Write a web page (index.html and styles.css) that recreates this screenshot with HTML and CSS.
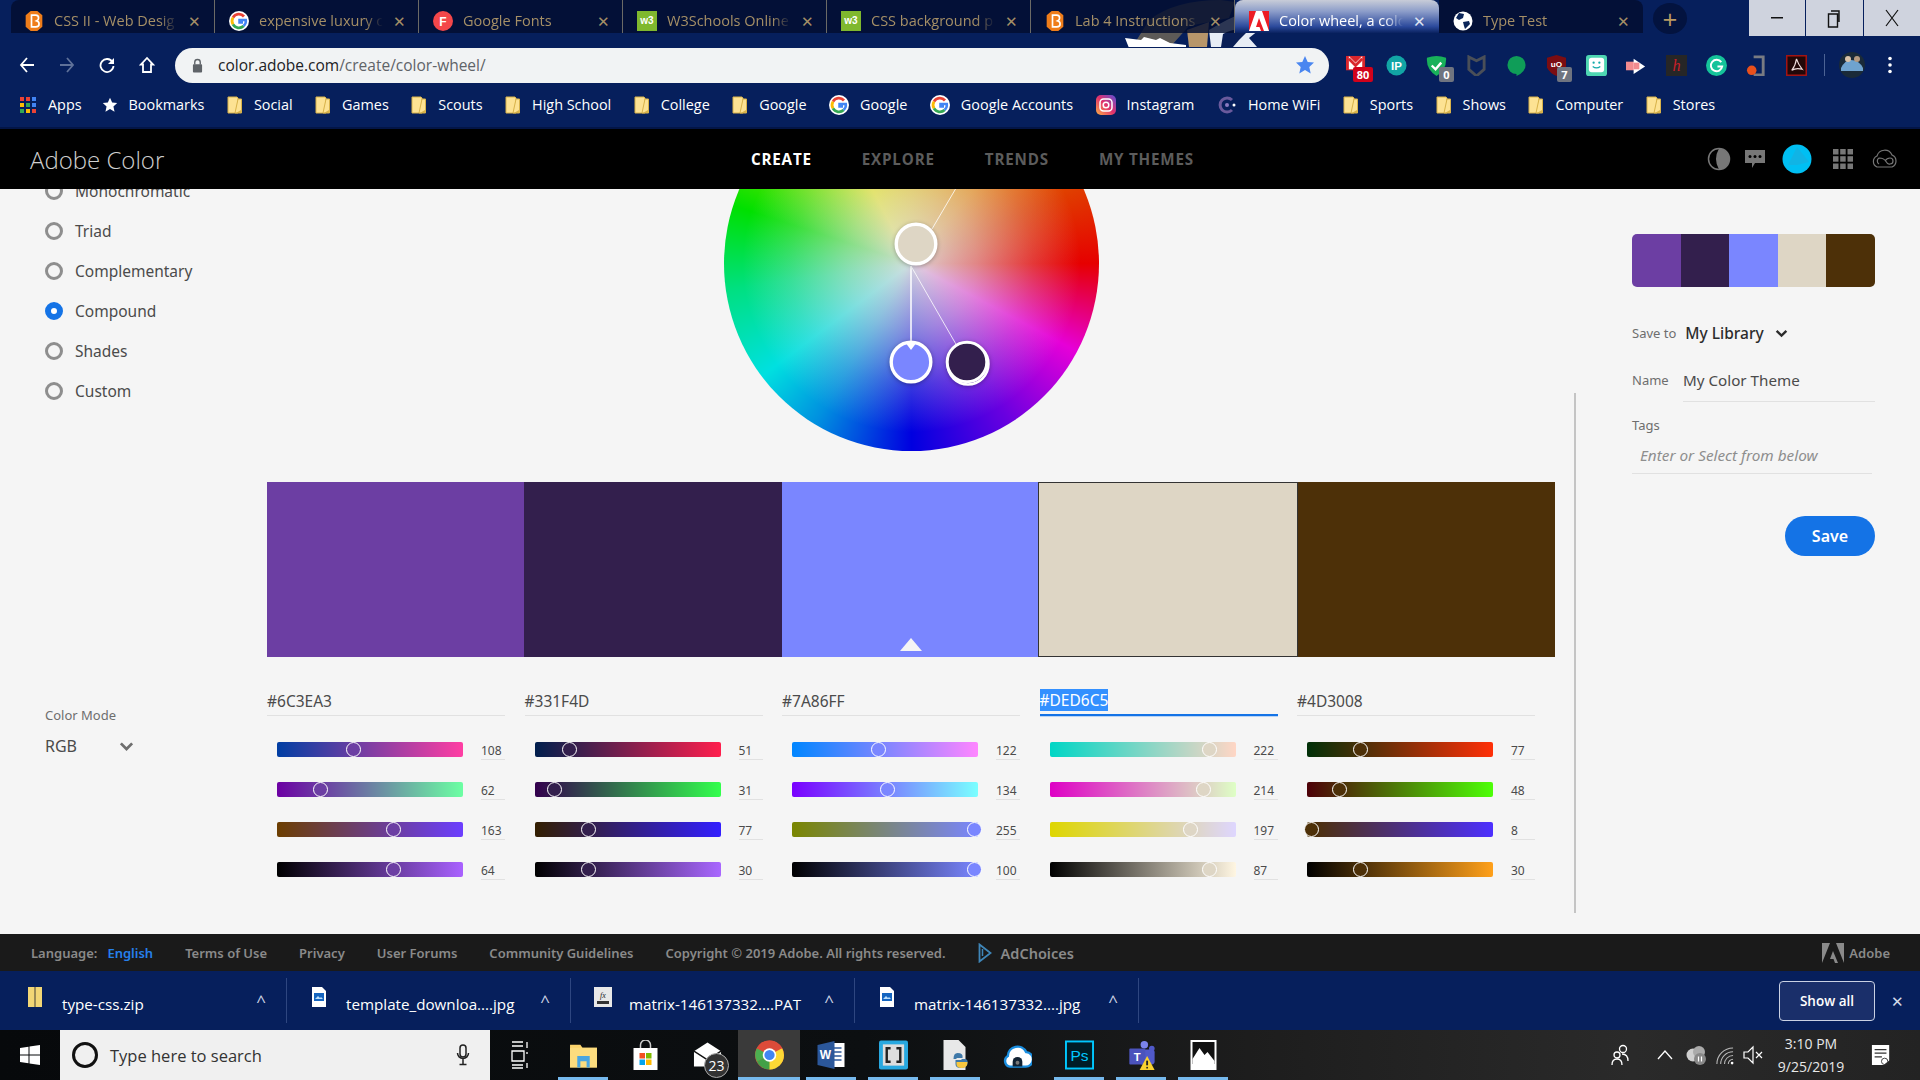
FILE: index.html
```html
<!DOCTYPE html>
<html lang="en">
<head>
    <meta charset="UTF-8">
    <title>Color wheel, a color palette generator | Adobe Color</title>
    <link rel="stylesheet" href="styles.css">
</head>
<body>
    <svg class="defs" width="0" height="0">
        <symbol id="folder" viewBox="0 0 16 18">
            <path d="M1 1h9l1 1v15H1z" fill="#fde293" stroke="#d8b24a"/>
            <path d="M11 3h3.500v14H8z" fill="#fde293" stroke="#d8b24a"/>
            <path d="M9 17l5-3v3z" fill="#d8b24a"/>
        </symbol>
        <symbol id="google" viewBox="0 0 20 20">
            <circle cx="10" cy="10" r="10" fill="#fff"/>
            <path d="M15 5.500A6.800 6.800 0 0 0 4 6.600" fill="none" stroke="#ea4335" stroke-width="2.800"/>
            <path d="M4 6.600a6.800 6.800 0 0 0 0 6.800" fill="none" stroke="#fbbc05" stroke-width="2.800"/>
            <path d="M4 13.400a6.800 6.800 0 0 0 10.600 1.600" fill="none" stroke="#34a853" stroke-width="2.800"/>
            <path d="M14.600 15a6.800 6.800 0 0 0 2.200-6H10.500v2.500h3.500" fill="none" stroke="#4285f4" stroke-width="2.500"/>
        </symbol>
        <symbol id="d2l" viewBox="0 0 20 24">
            <path d="M6 0h8l6 5v14l-6 5H6l-6-5V5z" fill="#ef7d1a"/>
            <path d="M7 5h5q3.500 0 3.500 3.300 0 2.500-2.200 3.500 2.800.800 2.800 3.700 0 3.500-4 3.500H7z" fill="none" stroke="#fff" stroke-width="2"/>
        </symbol>
        <symbol id="w3" viewBox="0 0 20 20">
            <rect width="20" height="20" fill="#7fb82e"/>
            <text x="10" y="13" font-size="10" font-weight="700" font-family="Liberation Sans" text-anchor="middle" fill="#fff">w3</text>
        </symbol>
        <symbol id="caret" viewBox="0 0 12 8">
            <path d="M1.500 1.500L6 6l4.500-4.500" fill="none" stroke="currentColor" stroke-width="2.200"/>
        </symbol>
        <symbol id="jpgfile" viewBox="0 0 14 20">
            <path d="M0 0h10l4 4v16H0z" fill="#fff"/>
            <rect x="2" y="6" width="10" height="8" fill="#1565c0"/>
            <path d="M3 12l3-3 2 2 1-1 2 2z" fill="#bbdefb"/>
        </symbol>
    </svg>

    <div class="chrome-top">
        <svg class="eagle" viewBox="0 0 140 47">
            <path d="M8 46L24 20Q50 0 96 0l14 2-6 16-40 8-18 20z" fill="#5d5a57"/>
            <path d="M0 38l16 2 3-3 12 3 4-2 10 5 16 2v3H4z" fill="#fff"/>
            <path d="M62 30l22-8-2 25H64z" fill="#b8966a"/>
            <path d="M84 30q20-12 36-18 12 4 14 18l-10 8 8 9H86z" fill="#e8edf5"/>
            <path d="M98 34q14-8 24-2l-8 8-6 7H96z" fill="#0a1f56"/>
        </svg>

        <div class="tabstrip">
            <div class="tab"><svg class="fav"><use href="#d2l"/></svg><span class="tab-title">CSS II - Web Desig</span><span class="tab-x">✕</span></div>
            <div class="tab"><svg class="fav"><use href="#google"/></svg><span class="tab-title">expensive luxury c</span><span class="tab-x">✕</span></div>
            <div class="tab">
                <svg class="fav" viewBox="0 0 20 20"><circle cx="10" cy="10" r="10" fill="#f4474a"/><text x="10" y="14.500" font-size="12" font-weight="700" font-family="Liberation Sans" text-anchor="middle" fill="#fff">F</text></svg>
                <span class="tab-title">Google Fonts</span><span class="tab-x">✕</span>
            </div>
            <div class="tab"><svg class="fav"><use href="#w3"/></svg><span class="tab-title">W3Schools Online</span><span class="tab-x">✕</span></div>
            <div class="tab"><svg class="fav"><use href="#w3"/></svg><span class="tab-title">CSS background p</span><span class="tab-x">✕</span></div>
            <div class="tab"><svg class="fav"><use href="#d2l"/></svg><span class="tab-title">Lab 4 Instructions</span><span class="tab-x">✕</span></div>
            <div class="tab tab-active">
                <svg class="fav" viewBox="0 0 20 20"><rect width="20" height="20" fill="#fff"/><path d="M7 0H0v20zM13 0h7v20zM10 7l5 13h-3l-1.500-4H7z" fill="#ec1c24"/></svg>
                <span class="tab-title">Color wheel, a colo</span><span class="tab-x">✕</span>
            </div>
            <div class="tab tab-last">
                <svg class="fav" viewBox="0 0 20 20"><circle cx="10" cy="10" r="9.500" fill="#fff"/><path d="M6 2l5 1-1 4-4 2-3-2zM10 11l6-1 1 3-5 5-1-3z" fill="#0b2559"/></svg>
                <span class="tab-title">Type Test</span><span class="tab-x">✕</span>
            </div>
            <div class="new-tab">+</div>
            <div class="win-btns">
                <div class="win-btn"><svg width="12" height="2"><rect width="12" height="1.500" fill="#111"/></svg></div>
                <div class="win-btn"><svg width="14" height="20" viewBox="0 0 14 20"><path d="M4 3h8v11M1.500 6h9v13h-9z" fill="none" stroke="#111" stroke-width="1.400"/></svg></div>
                <div class="win-btn"><svg width="14" height="18" viewBox="0 0 14 18"><path d="M1 1l12 16M13 1L1 17" fill="none" stroke="#111" stroke-width="1.200"/></svg></div>
            </div>
        </div>

        <div class="toolbar">
            <div class="nav-btns">
                <svg viewBox="0 0 16 18"><path d="M15 9H2M8 2L2 9l6 7" fill="none" stroke="#fff" stroke-width="1.800"/></svg>
                <svg viewBox="0 0 16 18"><path d="M1 9h13M8 2l6 7-6 7" fill="none" stroke="#5f7199" stroke-width="1.800"/></svg>
                <svg viewBox="0 0 16 18"><path d="M13.500 6A6.500 6.500 0 1 0 14.500 10" fill="none" stroke="#fff" stroke-width="1.800"/><path d="M15 2v6H9z" fill="#fff"/></svg>
                <svg viewBox="0 0 16 18"><path d="M8 2L2 8.500h2V16h8V8.500h2z" fill="none" stroke="#fff" stroke-width="1.800"/></svg>
            </div>
            <div class="urlbar">
                <svg class="lock" viewBox="0 0 12 16"><path d="M3 7V4.500a3 3 0 0 1 6 0V7" fill="none" stroke="#5f6368" stroke-width="1.500"/><rect x="1" y="6.500" width="10" height="9" rx="1" fill="#5f6368"/></svg>
                <span class="url"><b>color.adobe.com</b>/create/color-wheel/</span>
                <svg class="star" viewBox="0 0 20 20"><path d="M10 1l2.700 6 6.300.6-4.700 4.300 1.400 6.500L10 15l-5.700 3.400 1.400-6.500L1 7.600 7.300 7z" fill="#4a86f0"/></svg>
            </div>
            <div class="exts">
                <svg class="ext" viewBox="0 0 22 22"><path d="M0 1h20v15H0z" fill="#d9262c"/><path d="M3 1l7 7 7-7v14H3z" fill="#fff"/><path d="M3 4l7 7 7-7" fill="none" stroke="#d9262c" stroke-width="3"/></svg>
                <svg class="ext" viewBox="0 0 22 22"><circle cx="11" cy="11" r="10.500" fill="#12a5a5"/><text x="11" y="15.500" font-size="12" font-weight="700" font-family="Liberation Sans" text-anchor="middle" fill="#fff">IP</text></svg>
                <svg class="ext" viewBox="0 0 22 22"><path d="M1 3q10-4 20 0 1 12-10 19Q0 15 1 3z" fill="#18b15a"/><path d="M6 11l4 4 6-7" fill="none" stroke="#fff" stroke-width="2.500"/></svg>
                <svg class="ext" viewBox="0 0 22 22"><path d="M3 2l8 4 8-4v13l-8 7-8-7z" fill="none" stroke="#4a4f58" stroke-width="3"/></svg>
                <svg class="ext" viewBox="0 0 22 22"><path d="M11 1a9.500 9.500 0 0 1 9.500 9.500Q20.500 18 11 22v-2a9.500 9.500 0 0 1 0-19z" fill="#0f9d58"/></svg>
                <svg class="ext" viewBox="0 0 22 22"><path d="M1 3l10-3 10 3v10q-3 6-10 9-7-3-10-9z" fill="#7b0d12"/><text x="11" y="13" font-size="8.500" font-weight="700" font-family="Liberation Sans" text-anchor="middle" fill="#fff">uO</text></svg>
                <svg class="ext" viewBox="0 0 22 22"><rect width="22" height="22" rx="3" fill="#4ed6b2"/><rect x="3" y="3" width="16" height="15" rx="3" fill="#fff"/><circle cx="8" cy="8" r="1.200" fill="#1aa"/><circle cx="14" cy="8" r="1.200" fill="#1aa"/><path d="M7 12q4 3 8 0" fill="none" stroke="#1aa" stroke-width="1.300"/></svg>
                <svg class="ext" viewBox="0 0 22 22"><rect x="0" y="7" width="10" height="9" fill="#f28b8f"/><path d="M8 4l12 8-12 8z" fill="#fff"/><rect x="8" y="8" width="6" height="7" fill="#f28b8f"/></svg>
                <svg class="ext" viewBox="0 0 22 22"><rect width="22" height="22" fill="#262626"/><text x="11" y="17" font-size="17" font-style="italic" font-family="Liberation Serif" text-anchor="middle" fill="#c8202a">h</text></svg>
                <svg class="ext" viewBox="0 0 22 22"><circle cx="11" cy="11" r="11" fill="#15c39a"/><path d="M16 7.500a6 6 0 1 0 1 4.500h-5" fill="none" stroke="#fff" stroke-width="2"/></svg>
                <svg class="ext" viewBox="0 0 22 22"><path d="M8 2h10v19H8" fill="none" stroke="#787b82" stroke-width="3"/><circle cx="6" cy="16" r="5" fill="#e8501c"/></svg>
                <svg class="ext" viewBox="0 0 22 22"><rect x=".800" y=".800" width="20.400" height="20.400" fill="#220808" stroke="#a11414" stroke-width="1.600"/><path d="M11 4q1.500 5 6 11-6-2-11 1 4-5 5-12z" fill="none" stroke="#f1dede" stroke-width="1.200"/></svg>
                <span class="ext-sep"></span>
                <svg class="avatar" viewBox="0 0 26 26"><circle cx="13" cy="13" r="13" fill="#1a2a38"/><path d="M2 16q4-8 10-8 8 0 12 8v3H2z" fill="#6fa3cf"/><circle cx="9" cy="7" r="3" fill="#d9c2a8"/><circle cx="18" cy="7" r="3" fill="#b59a80"/></svg>
                <svg class="dots" viewBox="0 0 4 18"><circle cx="2" cy="2.500" r="1.800" fill="#fff"/><circle cx="2" cy="9" r="1.800" fill="#fff"/><circle cx="2" cy="15.500" r="1.800" fill="#fff"/></svg>
                <span class="badge badge-red badge-gmail">80</span>
                <span class="badge badge-shield">0</span>
                <span class="badge badge-ublock">7</span>
            </div>
        </div>

        <div class="bookmarks">
            <div class="bm bm-apps">
                <svg viewBox="0 0 16 16">
                    <rect width="4" height="4" fill="#ea4335"/><rect x="6" width="4" height="4" fill="#ea4335"/><rect x="12" width="4" height="4" fill="#4285f4"/>
                    <rect y="6" width="4" height="4" fill="#fbbc05"/><rect x="6" y="6" width="4" height="4" fill="#34a853"/><rect x="12" y="6" width="4" height="4" fill="#4285f4"/>
                    <rect y="12" width="4" height="4" fill="#34a853"/><rect x="6" y="12" width="4" height="4" fill="#fbbc05"/><rect x="12" y="12" width="4" height="4" fill="#ea4335"/>
                </svg>Apps
            </div>
            <div class="bm"><svg viewBox="0 0 20 20"><path d="M10 1l2.700 6 6.300.6-4.700 4.300 1.400 6.500L10 15l-5.700 3.400 1.400-6.500L1 7.600 7.300 7z" fill="#fff"/></svg>Bookmarks</div>
            <div class="bm"><svg><use href="#folder"/></svg>Social</div>
            <div class="bm"><svg><use href="#folder"/></svg>Games</div>
            <div class="bm"><svg><use href="#folder"/></svg>Scouts</div>
            <div class="bm"><svg><use href="#folder"/></svg>High School</div>
            <div class="bm"><svg><use href="#folder"/></svg>College</div>
            <div class="bm"><svg><use href="#folder"/></svg>Google</div>
            <div class="bm"><svg class="bm-g"><use href="#google"/></svg>Google</div>
            <div class="bm"><svg class="bm-g"><use href="#google"/></svg>Google Accounts</div>
            <div class="bm">
                <svg class="bm-g" viewBox="0 0 20 20"><defs><linearGradient id="ig" x1="0" y1="1" x2="1" y2="0"><stop offset="0" stop-color="#fcb045"/><stop offset=".5" stop-color="#e1306c"/><stop offset="1" stop-color="#5b51d8"/></linearGradient></defs><rect width="20" height="20" rx="5" fill="url(#ig)"/><rect x="4" y="4" width="12" height="12" rx="3.500" fill="none" stroke="#fff" stroke-width="1.500"/><circle cx="10" cy="10" r="2.800" fill="none" stroke="#fff" stroke-width="1.500"/></svg>Instagram
            </div>
            <div class="bm"><svg class="bm-g" viewBox="0 0 20 20"><path d="M15 5A7 7 0 1 0 15 15" fill="none" stroke="#6a5a9c" stroke-width="3"/><circle cx="10" cy="10" r="2" fill="#8a7ac0"/><circle cx="17" cy="10" r="1.500" fill="#fff"/></svg>Home WiFi</div>
            <div class="bm"><svg><use href="#folder"/></svg>Sports</div>
            <div class="bm"><svg><use href="#folder"/></svg>Shows</div>
            <div class="bm"><svg><use href="#folder"/></svg>Computer</div>
            <div class="bm"><svg><use href="#folder"/></svg>Stores</div>
        </div>
    </div>

    <header class="app-header">
        <div class="app-title">Adobe Color</div>
        <nav class="app-nav">
            <a class="on">CREATE</a>
            <a>EXPLORE</a>
            <a>TRENDS</a>
            <a>MY THEMES</a>
        </nav>
        <div class="app-icons">
            <svg class="ai-moon" viewBox="0 0 24 24"><circle cx="12" cy="12" r="10.500" fill="none" stroke="#777" stroke-width="1.500"/><path d="M12 1.500a10.500 10.500 0 0 1 0 21q-6-10.500 0-21z" fill="#777"/></svg>
            <svg class="ai-chat" viewBox="0 0 22 22"><path d="M1 2h20v13H11l-3 5v-5H1z" fill="#777"/><circle cx="6" cy="8.500" r="1.500" fill="#000"/><circle cx="11" cy="8.500" r="1.500" fill="#000"/><circle cx="16" cy="8.500" r="1.500" fill="#000"/></svg>
            <svg class="ai-user" viewBox="0 0 30 30"><circle cx="15" cy="15" r="14.500" fill="#00bff3"/><path d="M15 3l12 15-12 3H6z" fill="#20a9d8" opacity=".5"/></svg>
            <svg class="ai-grid" viewBox="0 0 20 20">
                <rect width="5.500" height="5.500" fill="#777"/><rect x="7.200" width="5.500" height="5.500" fill="#777"/><rect x="14.500" width="5.500" height="5.500" fill="#777"/>
                <rect y="7.200" width="5.500" height="5.500" fill="#777"/><rect x="7.200" y="7.200" width="5.500" height="5.500" fill="#777"/><rect x="14.500" y="7.200" width="5.500" height="5.500" fill="#777"/>
                <rect y="14.500" width="5.500" height="5.500" fill="#777"/><rect x="7.200" y="14.500" width="5.500" height="5.500" fill="#777"/><rect x="14.500" y="14.500" width="5.500" height="5.500" fill="#777"/>
            </svg>
            <svg class="ai-cc" viewBox="0 0 28 20"><path d="M7 18A6 6 0 0 1 7 7a8 8 0 0 1 15-1 6.500 6.500 0 0 1 0 12zM9 15a3.500 3.500 0 0 1 0-6q5 0 7 3.500t4 2.500a3 3 0 0 0 0-6q-3 0-5 3" fill="none" stroke="#777" stroke-width="1.200"/></svg>
        </div>
    </header>

    <main class="main">
        <aside class="sidebar">
            <ul class="rules">
                <li><i class="radio"></i>Monochromatic</li>
                <li><i class="radio"></i>Triad</li>
                <li><i class="radio"></i>Complementary</li>
                <li><i class="radio radio-on"></i>Compound</li>
                <li><i class="radio"></i>Shades</li>
                <li><i class="radio"></i>Custom</li>
            </ul>
            <div class="mode-label">Color Mode</div>
            <div class="mode-select">RGB <svg><use href="#caret"/></svg></div>
        </aside>

        <section class="center">
            <div class="wheel">
                <svg class="wheel-marks" viewBox="0 0 375 375">
                    <g stroke="#fff" fill="none">
                        <path d="M208 153L298 0" stroke-width="1" opacity=".8"/>
                        <path d="M187 190V268" stroke-width="1.500"/>
                        <path d="M187 190L233 270" stroke-width="1" opacity=".8"/>
                    </g>
                    <g class="node-shadow">
                        <circle cx="192" cy="168" r="19.800" fill="#ded6c5" stroke="#fff" stroke-width="3.400"/>
                        <circle cx="187" cy="286" r="19.800" fill="#7a86ff" stroke="#fff" stroke-width="3.400"/>
                        <path d="M181 266h12l-6 8z" fill="#fff"/>
                        <circle cx="244" cy="288" r="20.500" fill="none" stroke="#fff" stroke-width="2.500"/>
                        <circle cx="243" cy="286" r="19.800" fill="#331f4d" stroke="#fff" stroke-width="3"/>
                    </g>
                </svg>
            </div>

            <div class="swatches">
                <div class="swatch s1"></div>
                <div class="swatch s2"></div>
                <div class="swatch s3"><span class="swatch-arrow"></span></div>
                <div class="swatch s4"></div>
                <div class="swatch s5"></div>
            </div>

            <div class="channels">
                <div class="channel">
                    <div class="hex">#6C3EA3</div>
                    <div class="row"><div class="track" style="background:linear-gradient(90deg,#003ea3,#ff3ea3)"><i class="thumb" style="left:41.2%;background:#6c3ea3"></i></div><span class="val">108</span></div>
                    <div class="row"><div class="track" style="background:linear-gradient(90deg,#6c00a3,#6cffa3)"><i class="thumb" style="left:23.200%;background:#6c3ea3"></i></div><span class="val">62</span></div>
                    <div class="row"><div class="track" style="background:linear-gradient(90deg,#6c3e00,#6c3eff)"><i class="thumb" style="left:62.400%;background:#6c3ea3"></i></div><span class="val">163</span></div>
                    <div class="row"><div class="track" style="background:linear-gradient(90deg,#000,#a961ff)"><i class="thumb" style="left:62.400%;background:#6c3ea3"></i></div><span class="val">64</span></div>
                </div>
                <div class="channel">
                    <div class="hex">#331F4D</div>
                    <div class="row"><div class="track" style="background:linear-gradient(90deg,#001f4d,#ff1f4d)"><i class="thumb" style="left:18.800%;background:#331f4d"></i></div><span class="val">51</span></div>
                    <div class="row"><div class="track" style="background:linear-gradient(90deg,#33004d,#33ff4d)"><i class="thumb" style="left:10.500%;background:#331f4d"></i></div><span class="val">31</span></div>
                    <div class="row"><div class="track" style="background:linear-gradient(90deg,#331f00,#331fff)"><i class="thumb" style="left:29%;background:#331f4d"></i></div><span class="val">77</span></div>
                    <div class="row"><div class="track" style="background:linear-gradient(90deg,#000,#a967ff)"><i class="thumb" style="left:29%;background:#331f4d"></i></div><span class="val">30</span></div>
                </div>
                <div class="channel">
                    <div class="hex">#7A86FF</div>
                    <div class="row"><div class="track" style="background:linear-gradient(90deg,#0086ff,#ff86ff)"><i class="thumb" style="left:46.600%;background:#7a86ff"></i></div><span class="val">122</span></div>
                    <div class="row"><div class="track" style="background:linear-gradient(90deg,#7a00ff,#7affff)"><i class="thumb" style="left:51.300%;background:#7a86ff"></i></div><span class="val">134</span></div>
                    <div class="row"><div class="track" style="background:linear-gradient(90deg,#7a8600,#7a86ff)"><i class="thumb" style="left:98.200%;background:#7a86ff"></i></div><span class="val">255</span></div>
                    <div class="row"><div class="track" style="background:linear-gradient(90deg,#000,#7a86ff)"><i class="thumb" style="left:98.200%;background:#7a86ff"></i></div><span class="val">100</span></div>
                </div>
                <div class="channel">
                    <div class="hex hex-active"><span class="hex-sel">#DED6C5</span></div>
                    <div class="row"><div class="track" style="background:linear-gradient(90deg,#00d6c5,#ffd6c5)"><i class="thumb" style="left:85.800%;background:#ded6c5"></i></div><span class="val">222</span></div>
                    <div class="row"><div class="track" style="background:linear-gradient(90deg,#de00c5,#deffc5)"><i class="thumb" style="left:82.800%;background:#ded6c5"></i></div><span class="val">214</span></div>
                    <div class="row"><div class="track" style="background:linear-gradient(90deg,#ded600,#ded6ff)"><i class="thumb" style="left:75.600%;background:#ded6c5"></i></div><span class="val">197</span></div>
                    <div class="row"><div class="track" style="background:linear-gradient(90deg,#000,#fff6e2)"><i class="thumb" style="left:85.800%;background:#ded6c5"></i></div><span class="val">87</span></div>
                </div>
                <div class="channel">
                    <div class="hex">#4D3008</div>
                    <div class="row"><div class="track" style="background:linear-gradient(90deg,#003008,#ff3008)"><i class="thumb" style="left:28.800%;background:#4d3008"></i></div><span class="val">77</span></div>
                    <div class="row"><div class="track" style="background:linear-gradient(90deg,#4d0008,#4dff08)"><i class="thumb" style="left:17.500%;background:#4d3008"></i></div><span class="val">48</span></div>
                    <div class="row"><div class="track" style="background:linear-gradient(90deg,#4d3000,#4d30ff)"><i class="thumb" style="left:2.200%;background:#4d3008"></i></div><span class="val">8</span></div>
                    <div class="row"><div class="track" style="background:linear-gradient(90deg,#000,#ffa01a)"><i class="thumb" style="left:28.800%;background:#4d3008"></i></div><span class="val">30</span></div>
                </div>
            </div>
        </section>

        <aside class="panel">
            <span class="panel-rule"></span>
            <div class="mini">
                <div class="s1"></div><div class="s2"></div><div class="s3"></div><div class="s4"></div><div class="s5"></div>
            </div>
            <div class="save-to"><label>Save to</label><strong>My Library</strong><svg><use href="#caret"/></svg></div>
            <div class="name-row"><label>Name</label><div class="name-input">My Color Theme</div></div>
            <label class="tags-label">Tags</label>
            <div class="tags-input">Enter or Select from below</div>
            <button class="save-btn">Save</button>
        </aside>
    </main>

    <footer class="app-footer">
        <span class="lang">Language:</span><a class="english">English</a>
        <a>Terms of Use</a>
        <a>Privacy</a>
        <a>User Forums</a>
        <a>Community Guidelines</a>
        <span>Copyright © 2019 Adobe. All rights reserved.</span>
        <a class="adchoices"><svg viewBox="0 0 14 20"><path d="M1.500 1.500L12.500 10 1.500 18.500z" fill="none" stroke="#3f86b8" stroke-width="1.800"/><path d="M4.500 6v7" stroke="#3f86b8" stroke-width="1.500"/></svg>AdChoices</a>
        <a class="adobe-mark"><svg viewBox="0 0 22 20"><path d="M8 0H0v20zM14 0h8v20zM11 8l5 12h-3l-1.500-4H8z" fill="#8a8a8a"/></svg>Adobe</a>
    </footer>

    <div class="downloads">
        <div class="dl">
            <svg class="dl-icon" viewBox="0 0 14 20"><rect width="14" height="20" fill="#f2d675"/><path d="M6 0h2v20H6z" fill="#9a8a55"/></svg>
            <span>type-css.zip</span><em class="dl-caret">^</em>
        </div>
        <div class="dl dl-next">
            <svg class="dl-icon"><use href="#jpgfile"/></svg>
            <span>template_downloa....jpg</span><em class="dl-caret">^</em>
        </div>
        <div class="dl dl-next">
            <svg class="dl-icon dl-wide" viewBox="0 0 18 20"><rect width="18" height="20" fill="#e8e8e8"/><text x="9" y="11" font-size="8" font-style="italic" font-family="Liberation Serif" text-anchor="middle" fill="#222">fx</text><rect x="3" y="14" width="12" height="3" fill="#333"/></svg>
            <span>matrix-146137332....PAT</span><em class="dl-caret">^</em>
        </div>
        <div class="dl dl-next">
            <svg class="dl-icon"><use href="#jpgfile"/></svg>
            <span>matrix-146137332....jpg</span><em class="dl-caret">^</em>
        </div>
        <button class="show-all">Show all</button>
        <span class="dl-close">✕</span>
    </div>

    <div class="taskbar">
        <div class="start">
            <svg viewBox="0 0 20 20"><path d="M0 3l8.500-1.200v7.700H0zM9.500 1.600L20 0v9.500H9.500zM0 10.500h8.500v7.700L0 17zM9.500 10.500H20V20L9.500 18.400z" fill="#fff"/></svg>
        </div>
        <div class="search">
            <i class="cortana"></i>
            <span>Type here to search</span>
            <svg class="mic" viewBox="0 0 14 22"><rect x="4" y="1" width="6" height="12" rx="3" fill="none" stroke="#222" stroke-width="1.500"/><path d="M1.500 9a5.500 5.500 0 0 0 11 0M7 15v5M3.500 20.500h7" fill="none" stroke="#222" stroke-width="1.500"/></svg>
        </div>
        <div class="tasks">
            <div class="task"><svg class="tv" viewBox="0 0 20 28"><path d="M1 1h11M1 5h11M16 1v6M1 10h12v10H1zM16 11v2M1 24h11M1 27h11M16 22v5" fill="none" stroke="#fff" stroke-width="1.300"/></svg></div>
            <div class="task run"><svg viewBox="0 0 28 28"><path d="M1 4h10l2 3h14v19H1z" fill="#fbd36b"/><rect x="1" y="7" width="26" height="19" fill="#fcdc7e"/><path d="M8 15h12v11h-3v-6h-6v6H8z" fill="#4aa5e0"/></svg></div>
            <div class="task"><svg viewBox="0 0 28 30"><path d="M2 8h24v22H2z" fill="#fff"/><path d="M9 8V5a5 5 0 0 1 10 0v3" fill="none" stroke="#ccc" stroke-width="1.500"/><rect x="8" y="13" width="5.500" height="5.500" fill="#f25022"/><rect x="14.500" y="13" width="5.500" height="5.500" fill="#7fba00"/><rect x="8" y="19.500" width="5.500" height="5.500" fill="#00a4ef"/><rect x="14.500" y="19.500" width="5.500" height="5.500" fill="#ffb900"/></svg></div>
            <div class="task task-mail">
                <svg viewBox="0 0 30 28"><path d="M1 10L15 1l14 9v16H1z" fill="#fff"/><path d="M1 10l14 9 14-9" fill="none" stroke="#111" stroke-width="1.400"/></svg>
                <span class="mail-count">23</span>
            </div>
            <div class="task run task-active"><svg viewBox="0 0 30 30"><circle cx="15" cy="15" r="15" fill="#dd4b39"/><path d="M15 15L2 22a15 15 0 0 1 0-14z" fill="#4caf50"/><path d="M2 22A15 15 0 0 0 15 30a15 15 0 0 0 13-8L15 15z" fill="#43a047"/><path d="M15 30a15 15 0 0 0 15-15q0-4-2-7H15z" fill="#fdd835"/><path d="M28 8A15 15 0 0 0 15 0 15 15 0 0 0 2 8l13 7z" fill="#dd4b39"/><circle cx="15" cy="15" r="7" fill="#fff"/><circle cx="15" cy="15" r="5.300" fill="#4285f4"/></svg></div>
            <div class="task run"><svg viewBox="0 0 28 30"><path d="M12 3h15v24H12z" fill="#fff"/><path d="M15 8h9M15 12h9M15 16h9M15 20h9" stroke="#2b579a" stroke-width="1.500"/><path d="M0 5l17-4v28L0 25z" fill="#2b579a"/><text x="8" y="19" font-size="12" font-weight="700" font-family="Liberation Sans" text-anchor="middle" fill="#fff">W</text></svg></div>
            <div class="task run"><svg viewBox="0 0 30 30"><rect width="30" height="30" rx="2" fill="#28a8e0"/><rect x="4" y="4" width="22" height="22" fill="#ddd"/><path d="M12 8H8v14h4M18 8h4v14h-4" fill="none" stroke="#222" stroke-width="2.500"/></svg></div>
            <div class="task run"><svg viewBox="0 0 28 30"><path d="M2 0h15l7 7v23H2z" fill="#e8e8e8"/><path d="M16 13q6 0 5 5h-6v1h8q4 0 3 5-1 4-7 4-5 0-5-4v-4h6v-1h-8q0-6 4-6z" fill="#3f78a8"/><path d="M21 22h5q0 6-6 6-5 0-5-4v-2z" fill="#f8c63d"/></svg></div>
            <div class="task"><svg viewBox="0 0 30 28"><path d="M7 26a6 6 0 0 1-2-11A10 10 0 0 1 24 11a7.500 7.500 0 0 1-1 15z" fill="#fff" stroke="#1a8ee0" stroke-width="2.500"/><path d="M10 26v-5a5 5 0 0 1 10 0v5z" fill="#123"/><circle cx="15" cy="22" r="2" fill="#777"/></svg></div>
            <div class="task run"><svg viewBox="0 0 30 30"><rect x="1" y="1" width="28" height="28" fill="#001d26" stroke="#00c8ff" stroke-width="2"/><text x="15" y="21" font-size="16" font-family="Liberation Sans" text-anchor="middle" fill="#00c8ff">Ps</text></svg></div>
            <div class="task run">
                <svg viewBox="0 0 30 32"><circle cx="18" cy="5" r="4" fill="#7b83eb"/><circle cx="26" cy="9" r="3" fill="#5059c9"/><rect x="13" y="10" width="16" height="16" rx="3" fill="#5059c9"/><rect x="2" y="9" width="17" height="17" rx="1" fill="#4b53bc"/><text x="10.500" y="22" font-size="12" font-weight="700" font-family="Liberation Sans" text-anchor="middle" fill="#fff">T</text><path d="M21 17l8 15H13z" fill="#f8d12f"/><path d="M21 22v5" stroke="#222" stroke-width="2"/><circle cx="21" cy="29.500" r="1" fill="#222"/></svg>
            </div>
            <div class="task run"><svg viewBox="0 0 26 30"><rect width="26" height="30" fill="#fff"/><rect x="2" y="2" width="22" height="22" fill="#111"/><path d="M2 24v-5l7-11 5 7 3-3 7 9v3z" fill="#fff"/></svg></div>
        </div>
        <div class="tray">
            <svg class="tr-people" viewBox="0 0 20 22"><circle cx="13" cy="5" r="3.500" fill="none" stroke="#fff" stroke-width="1.300"/><circle cx="7" cy="11" r="3" fill="none" stroke="#fff" stroke-width="1.300"/><path d="M2 21q0-6 5-6t5 6M12 10q6 0 6 7" fill="none" stroke="#fff" stroke-width="1.300"/></svg>
            <svg class="tr-up" viewBox="0 0 16 10"><path d="M1 9l7-8 7 8" fill="none" stroke="#fff" stroke-width="1.300"/></svg>
            <svg class="tr-cloud" viewBox="0 0 22 22"><circle cx="8" cy="11" r="6.500" fill="#cfcfcf"/><circle cx="14" cy="8" r="6" fill="#aaa"/><circle cx="15" cy="15" r="6" fill="#888"/><path d="M13.500 12.500v5M16.500 12.500v5" stroke="#fff" stroke-width="1.200"/></svg>
            <svg class="tr-wifi" viewBox="0 0 20 20"><path d="M2 19A17 17 0 0 1 19 2M6 19A13 13 0 0 1 19 6M10 19a9 9 0 0 1 9-9M14 19a5 5 0 0 1 5-5" fill="none" stroke="#bbb" stroke-width="1.100"/><circle cx="18" cy="18" r="1.400" fill="#fff"/></svg>
            <svg class="tr-sound" viewBox="0 0 20 20"><path d="M1 7h4l5-5v16l-5-5H1z" fill="none" stroke="#fff" stroke-width="1.200"/><path d="M13 7l6 6M19 7l-6 6" stroke="#fff" stroke-width="1.200"/></svg>
            <div class="clock"><div>3:10 PM</div><div>9/25/2019</div></div>
            <svg class="tr-note" viewBox="0 0 22 24"><path d="M1 1h19v17l-6 5H1z" fill="#fff"/><path d="M4 6h13M4 10h13M4 14h8" stroke="#333" stroke-width="1.300"/><circle cx="15" cy="19" r="3.500" fill="none" stroke="#333"/></svg>
        </div>
    </div>
</body>
</html>
```

FILE: styles.css
```css
* {
    box-sizing: border-box;
}

html, body {
    margin: 0;
    padding: 0;
}

body {
    width: 1920px;
    height: 1080px;
    overflow: hidden;
    display: flex;
    flex-direction: column;
    font-family: "Open Sans", Arial, sans-serif;
    background-color: #f5f5f5;
}

.defs {
    position: absolute;
}

svg {
    display: block;
    flex: none;
}

/* browser chrome */
.chrome-top {
    position: relative;
    height: 129px;
    flex: none;
    background-color: #061f5c;
    border-bottom: 2px solid #031546;
    overflow: hidden;
}

.eagle {
    position: absolute;
    left: 1125px;
    top: 0;
    width: 140px;
    height: 47px;
}

.tabstrip {
    position: relative;
    display: flex;
    height: 33px;
    padding-left: 11px;
}

.tab {
    position: relative;
    display: flex;
    align-items: center;
    width: 204px;
    height: 33px;
    padding: 8px 0 0 14px;
    background-color: rgba(2, 14, 48, 0.82);
    border-right: 1px solid #6b6a66;
    color: #a58f66;
    font-size: 14.500px;
}

.tab:first-child {
    padding-left: 13px;
    border-radius: 8px 0 0 0;
}

.tab-active {
    background: linear-gradient(#c8ccd8 0%, #8b9cc9 35%, #2c4a9c 80%, #0a2260 100%);
    color: #fff;
    border-right: none;
    border-radius: 8px 8px 0 0;
}

.tab-last {
    border-right: none;
    border-radius: 0 8px 0 0;
}

.fav {
    width: 20px;
    height: 20px;
    margin-right: 10px;
}

.tab-title {
    width: 124px;
    margin-right: 8px;
    white-space: nowrap;
    overflow: hidden;
    -webkit-mask-image: linear-gradient(90deg, #000 85%, transparent);
    mask-image: linear-gradient(90deg, #000 85%, transparent);
}

.tab-x {
    width: 16px;
    text-align: center;
    font-size: 15px;
}

.tab-active .tab-x {
    color: #dfe4f2;
}

.new-tab {
    width: 34px;
    height: 31px;
    margin: 3px 0 0 10px;
    border-radius: 50%;
    background-color: #03133f;
    color: #b89a63;
    font-size: 26px;
    line-height: 33px;
    text-align: center;
}

.win-btns {
    display: flex;
    margin-left: auto;
    height: 36px;
    gap: 1px;
    background-color: #061f5c;
}

.win-btn {
    width: 56.500px;
    height: 36px;
    background-color: #cfd3de;
    display: flex;
    align-items: center;
    justify-content: center;
}

.toolbar {
    position: relative;
    display: flex;
    align-items: center;
    height: 52px;
    padding-top: 12px;
}

.nav-btns {
    display: flex;
    gap: 24px;
    width: 175px;
    padding-left: 19px;
}

.nav-btns svg {
    width: 16px;
    height: 18px;
}

.urlbar {
    display: flex;
    align-items: center;
    width: 1154px;
    height: 35px;
    padding: 0 14px 0 17px;
    border-radius: 18px;
    background-color: #f1f3f4;
}

.lock {
    width: 11px;
    height: 15px;
    margin-right: 15px;
}

.url {
    color: #5f6368;
    font-size: 15.500px;
    white-space: nowrap;
}

.url b {
    color: #202124;
    font-weight: 400;
}

.star {
    width: 20px;
    height: 20px;
    margin-left: auto;
}

.exts {
    position: relative;
    display: flex;
    align-items: center;
    gap: 19px;
    padding-left: 17px;
}

.ext {
    width: 21px;
    height: 21px;
}

.ext-sep {
    width: 1px;
    height: 22px;
    background-color: #4c6394;
    margin-left: -2px;
}

.avatar {
    width: 26px;
    height: 26px;
    margin-left: -5px;
}

.dots {
    width: 4px;
    height: 18px;
    margin-left: 4px;
}

.badge {
    position: absolute;
    height: 15px;
    min-width: 15px;
    padding: 0 2px;
    border-radius: 2px;
    background-color: #6f7480;
    color: #fff;
    font-size: 11px;
    font-weight: 700;
    line-height: 15px;
    text-align: center;
    top: 15px;
}

.badge-red {
    background-color: #d0021b;
}

.badge-gmail {
    left: 24px;
    width: 20px;
}

.badge-shield {
    left: 110px;
}

.badge-ublock {
    left: 228px;
}

.bookmarks {
    display: flex;
    align-items: center;
    height: 39px;
    padding-left: 20px;
    color: #fff;
    font-size: 14.400px;
}

.bm {
    display: flex;
    align-items: center;
    gap: 11px;
    margin-right: 22.500px;
    white-space: nowrap;
}

.bm svg {
    width: 16px;
    height: 18px;
}

.bm .bm-g {
    width: 20px;
    height: 20px;
}

.bm-apps {
    gap: 12px;
    margin-right: 20px;
}

/* adobe color page */
.app-header {
    position: relative;
    display: flex;
    align-items: center;
    height: 60px;
    flex: none;
    background-color: #000;
    z-index: 5;
}

.app-title {
    width: 751px;
    padding-left: 30px;
    color: #cfcfcf;
    font-size: 24px;
    font-weight: 300;
}

.app-nav {
    display: flex;
    gap: 50px;
}

.app-nav a {
    color: #5c5c5c;
    font-size: 15.200px;
    font-weight: 700;
    letter-spacing: 0.8px;
}

.app-nav a.on {
    color: #fff;
}

.app-icons {
    display: flex;
    align-items: center;
    gap: 17px;
    margin-left: auto;
    padding-right: 22px;
}

.ai-moon { width: 24px; height: 24px; margin-right: -4px; }
.ai-chat { width: 22px; height: 22px; margin-right: -1px; }
.ai-user { width: 30px; height: 30px; }
.ai-grid { width: 20px; height: 20px; margin-left: 4px; }
.ai-cc { width: 28px; height: 20px; }

.main {
    position: relative;
    display: flex;
    flex: 1;
    min-height: 0;
    overflow: hidden;
    font-family: "Noto Sans", Arial, sans-serif;
    color: #4b4b4b;
    background-color: #f5f5f5;
}

.sidebar {
    width: 267px;
    flex: none;
    padding-left: 45px;
}

.rules {
    list-style: none;
    margin: -19px 0 0;
    padding: 0;
}

.rules li {
    display: flex;
    align-items: center;
    height: 40px;
    padding-top: 1px;
    font-size: 15.500px;
}

.radio {
    width: 18px;
    height: 18px;
    margin-right: 12px;
    border: 3px solid #8e8e8e;
    border-radius: 50%;
}

.radio-on {
    border: 6px solid #1473e6;
    background-color: #fff;
}

.mode-label {
    margin-top: 296px;
    color: #6e6e6e;
    font-size: 13px;
    line-height: 18px;
}

.mode-select {
    display: flex;
    align-items: center;
    margin-top: 10px;
    font-size: 16px;
    line-height: 24px;
}

.mode-select svg {
    width: 15px;
    height: 11px;
    margin-left: 42px;
    color: #6e6e6e;
}

.center {
    width: 1288px;
    flex: none;
}

.wheel {
    position: relative;
    width: 375px;
    height: 375px;
    margin: -113px auto 0;
    border-radius: 50%;
    background:
        radial-gradient(circle closest-side, rgba(222, 222, 222, 0.95) 0, rgba(222, 222, 222, 0.6) 35%, rgba(222, 222, 222, 0.25) 65%, rgba(222, 222, 222, 0) 90%),
        conic-gradient(#e8c000 0deg, #e88000 40deg, #e03c00 66deg, #e60000 90deg, #e600d8 118deg, #6a00e0 148deg, #0000e0 180deg, #0090e0 211deg, #00e0e0 233deg, #00e080 262deg, #00e000 288deg, #e8e800 332deg, #e8c000 360deg);
}

.wheel-marks {
    position: absolute;
    left: 0;
    top: 0;
    width: 375px;
    height: 375px;
}

.node-shadow {
    filter: drop-shadow(0 1px 2px rgba(0, 0, 0, 0.3));
}

.s1 { background-color: #6c3ea3; }
.s2 { background-color: #331f4d; }
.s3 { background-color: #7a86ff; }
.s4 { background-color: #ded6c5; }
.s5 { background-color: #4d3008; }

.swatches {
    display: flex;
    height: 175px;
    margin-top: 31px;
}

.swatch {
    position: relative;
    flex: 1;
}

.swatch.s4 {
    border: 1px solid #333;
    border-left: none;
    box-shadow: -1px 0 0 #333;
}

.swatch-arrow {
    position: absolute;
    left: 50%;
    bottom: 6px;
    margin-left: -11px;
    border-left: 11px solid transparent;
    border-right: 11px solid transparent;
    border-bottom: 13px solid #f5f5f5;
}

.channels {
    display: flex;
    gap: 19.500px;
    margin-top: 31px;
}

.channel {
    width: 238px;
    flex: none;
}

.hex {
    height: 28px;
    margin-bottom: 26px;
    border-bottom: 1px solid #e1e1e1;
    font-size: 15.500px;
    line-height: 27px;
}

.hex-active {
    border-bottom: 2px solid #1473e6;
    box-shadow: 0 1px 0 #b9d4f5;
    line-height: 22px;
    padding-top: 1px;
    color: #fff;
}

.hex-sel {
    display: inline-block;
    height: 22px;
    background-color: #3390ff;
}

.row {
    display: flex;
    height: 40px;
    padding-left: 10px;
}

.track {
    position: relative;
    width: 186px;
    height: 15px;
    margin-right: 18px;
    border-radius: 2px;
}

.thumb {
    position: absolute;
    top: 0;
    width: 15px;
    height: 15px;
    margin-left: -7.500px;
    border: 1px solid #fff;
    border-radius: 50%;
}

.val {
    width: 24px;
    height: 18px;
    border-bottom: 1px solid #e1e1e1;
    font-size: 12px;
    line-height: 17px;
}

.panel {
    flex: 1;
    padding: 45px 45px 0 77px;
}

.panel-rule {
    position: absolute;
    left: 1574px;
    top: 204px;
    width: 2px;
    height: 520px;
    background-color: #c4c4c4;
}

.mini {
    display: flex;
    height: 53px;
    border-radius: 5px;
    overflow: hidden;
}

.mini div {
    flex: 1;
}

.save-to {
    display: flex;
    align-items: center;
    height: 24px;
    margin-top: 34px;
}

.save-to label,
.name-row label,
.tags-label {
    color: #6e6e6e;
    font-size: 13px;
}

.save-to strong {
    margin-left: 9px;
    color: #2c2c2c;
    font-size: 15.500px;
    font-weight: 500;
}

.save-to svg {
    width: 13px;
    height: 9px;
    margin-left: 11px;
    color: #2c2c2c;
}

.name-row {
    display: flex;
    align-items: flex-start;
    margin-top: 22px;
}

.name-row label {
    width: 51px;
    line-height: 27px;
}

.name-input {
    flex: 1;
    height: 35px;
    border-bottom: 1px solid #e1e1e1;
    font-size: 15.200px;
    line-height: 27px;
}

.tags-label {
    display: block;
    margin-top: 14px;
    line-height: 18px;
}

.tags-input {
    width: 240px;
    height: 40px;
    padding: 10px 0 0 8px;
    border-bottom: 1px solid #e1e1e1;
    color: #8e8e8e;
    font-size: 15.300px;
    font-style: italic;
    line-height: 23px;
}

.save-btn {
    display: block;
    width: 90px;
    height: 40px;
    margin: 42px 0 0 auto;
    border: none;
    border-radius: 20px;
    background-color: #1473e6;
    color: #fff;
    font-family: inherit;
    font-size: 16px;
    font-weight: 600;
}

.app-footer {
    display: flex;
    align-items: center;
    height: 37px;
    flex: none;
    padding: 0 30px 0 31px;
    background-color: #1a1a1a;
    color: #8a8a8a;
    font-family: "Noto Sans", Arial, sans-serif;
    font-size: 13px;
    font-weight: 600;
    white-space: nowrap;
}

.app-footer a,
.app-footer span {
    margin-right: 32px;
}

.app-footer .lang {
    margin-right: 10px;
}

.app-footer .english {
    color: #2680eb;
}

.adchoices {
    display: flex;
    align-items: center;
    gap: 9px;
    font-size: 14.500px;
}

.adchoices svg {
    width: 14px;
    height: 20px;
}

.adobe-mark {
    display: flex;
    align-items: center;
    gap: 5px;
    margin-left: auto;
    margin-right: 0 !important;
}

.adobe-mark svg {
    width: 22px;
    height: 20px;
}

.downloads {
    display: flex;
    align-items: center;
    height: 59px;
    flex: none;
    background-color: #061f5c;
    color: #fff;
    font-size: 15.200px;
}

.dl {
    position: relative;
    display: flex;
    align-items: center;
    width: 287px;
    height: 45px;
    padding: 6px 0 0 28px;
    border-right: 1px solid #2e4680;
    white-space: nowrap;
}

.dl-next {
    width: 284px;
    padding-left: 25px;
}

.dl-icon {
    width: 14px;
    height: 20px;
    margin: -14px 20px 0 0;
}

.dl-wide {
    width: 18px;
    margin-right: 17px;
    margin-left: -2px;
}

.dl-caret {
    position: absolute;
    right: 20px;
    top: 11px;
    color: #ccd3e3;
    font-size: 17px;
    font-style: normal;
}

.show-all {
    width: 96px;
    height: 40px;
    margin-left: auto;
    border: 1px solid #c9d1e3;
    border-radius: 4px;
    background-color: #1a2f6a;
    color: #fff;
    font-family: inherit;
    font-size: 13.500px;
    font-weight: 600;
}

.dl-close {
    width: 45px;
    color: #d5dbe8;
    font-size: 15px;
    text-align: center;
}

.taskbar {
    display: flex;
    height: 50px;
    flex: none;
    background: linear-gradient(90deg, #07090b 0%, #0c0f11 45%, #1d1d1d 65%, #2a2a2a 85%, #232323 100%);
    color: #fff;
}

.start {
    display: flex;
    align-items: center;
    justify-content: center;
    width: 60px;
}

.start svg {
    width: 20px;
    height: 20px;
}

.search {
    display: flex;
    align-items: center;
    width: 430px;
    padding-left: 12px;
    background-color: #f0f0f0;
    color: #333;
    font-size: 16.500px;
}

.cortana {
    width: 26px;
    height: 26px;
    margin-right: 12px;
    border: 3px solid #111;
    border-radius: 50%;
}

.mic {
    width: 14px;
    height: 22px;
    margin-left: 194px;
}

.tasks {
    display: flex;
}

.task {
    position: relative;
    display: flex;
    align-items: center;
    justify-content: center;
    width: 62px;
    height: 50px;
}

.task svg {
    width: 29px;
    height: 30px;
}

.task .tv {
    width: 20px;
    height: 28px;
}

.task.run::after {
    content: "";
    position: absolute;
    left: 6px;
    right: 6px;
    bottom: 0;
    height: 3px;
    background-color: #76b9ed;
}

.task-active {
    background-color: #3a3a3a;
}

.task.task-active::after {
    left: 0;
    right: 0;
}

.mail-count {
    position: absolute;
    right: 9px;
    bottom: 2px;
    width: 25px;
    height: 25px;
    border: 1px solid #aaa;
    border-radius: 50%;
    background-color: #333;
    font-size: 14px;
    line-height: 23px;
    text-align: center;
}

.tray {
    display: flex;
    align-items: center;
    margin-left: auto;
    padding-right: 29px;
}

.tr-people { width: 20px; height: 22px; margin-right: 27px; }
.tr-up { width: 16px; height: 10px; margin-right: 12px; }
.tr-cloud { width: 22px; height: 22px; margin-right: 8px; }
.tr-wifi { width: 19px; height: 19px; margin-right: 9px; }
.tr-sound { width: 20px; height: 20px; margin-right: 12px; }
.tr-note { width: 20px; height: 24px; margin-left: 24px; }

.clock {
    width: 72px;
    color: #e8e8e8;
    font-size: 14px;
    line-height: 23px;
    text-align: center;
}
```
